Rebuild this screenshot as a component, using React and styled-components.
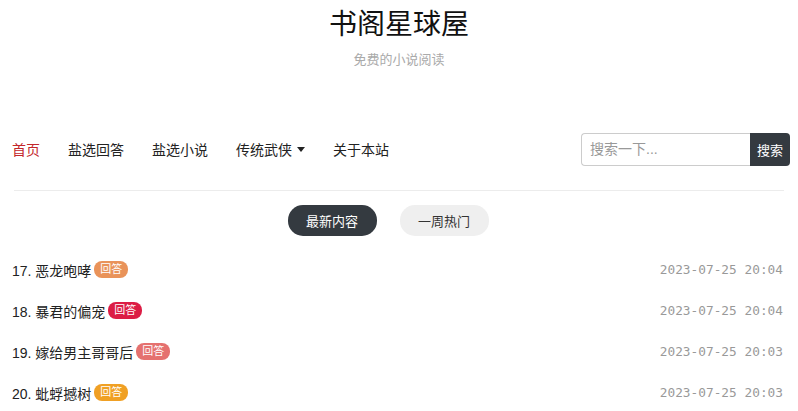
import styled, { createGlobalStyle } from "styled-components";

const GlobalStyle = createGlobalStyle`
  body {
    margin: 0;
    background: #fff;
    font-family: "Liberation Sans", "Noto Sans CJK SC", sans-serif;
    color: #222;
  }
`;

const items = [
  { no: 17, title: "恶龙咆哮", color: "#e9935a", time: "2023-07-25 20:04" },
  { no: 18, title: "暴君的偏宠", color: "#dc1d45", time: "2023-07-25 20:04" },
  { no: 19, title: "嫁给男主哥哥后", color: "#e5716f", time: "2023-07-25 20:03" },
  { no: 20, title: "蚍蜉撼树", color: "#f0a024", time: "2023-07-25 20:03" },
];

function App() {
  return (
    <Page>
      <GlobalStyle />
      <Header>
        <Title>书阁星球屋</Title>
        <Subtitle>免费的小说阅读</Subtitle>
      </Header>

      <NavBar>
        <Menu>
          <MenuItem $active>首页</MenuItem>
          <MenuItem>盐选回答</MenuItem>
          <MenuItem>盐选小说</MenuItem>
          <MenuItem>
            传统武侠<Caret />
          </MenuItem>
          <MenuItem>关于本站</MenuItem>
        </Menu>
        <SearchForm>
          <SearchInput placeholder="搜索一下..." />
          <SearchButton>搜索</SearchButton>
        </SearchForm>
      </NavBar>

      <Divider />

      <Tabs>
        <Tab $active>最新内容</Tab>
        <Tab>一周热门</Tab>
      </Tabs>

      <List>
        {items.map((item) => (
          <Row key={item.no}>
            <RowTitle>
              {item.no}. {item.title}
              <Badge $color={item.color}>回答</Badge>
            </RowTitle>
            <Time>{item.time}</Time>
          </Row>
        ))}
      </List>
    </Page>
  );
}

const Page = styled.div`
  width: 798px;
  height: 411px;
  overflow: hidden;
`;

const Header = styled.header`
  display: flex;
  flex-direction: column;
  align-items: center;
  padding-top: 6px;
`;

const Title = styled.h1`
  margin: 0;
  font-size: 28px;
  font-weight: 400;
  line-height: 38px;
  color: #111;
`;

const Subtitle = styled.p`
  margin: 6px 0 0;
  font-size: 13px;
  line-height: 20px;
  color: #aaa;
`;

const NavBar = styled.nav`
  display: flex;
  align-items: center;
  justify-content: space-between;
  margin-top: 62px;
  padding: 0 8px 0 12px;
  height: 34px;
`;

const Menu = styled.ul`
  display: flex;
  align-items: center;
  gap: 28px;
  margin: 0;
  padding: 0;
  list-style: none;
`;

const MenuItem = styled.li`
  display: flex;
  align-items: center;
  font-size: 14px;
  color: ${(p) => (p.$active ? "#c3272b" : "#222")};
`;

const Caret = styled.span`
  margin-left: 5px;
  width: 0;
  height: 0;
  border-left: 4px solid transparent;
  border-right: 4px solid transparent;
  border-top: 5px solid #222;
`;

const SearchForm = styled.form`
  display: flex;
  height: 33px;
`;

const SearchInput = styled.input`
  box-sizing: border-box;
  width: 169px;
  height: 100%;
  padding: 0 8px;
  border: 1px solid #ccc;
  border-right: none;
  border-radius: 4px 0 0 4px;
  font-family: inherit;
  font-size: 14px;
  outline: none;
  &::placeholder {
    color: #999;
  }
`;

const SearchButton = styled.button`
  width: 40px;
  height: 100%;
  border: none;
  border-radius: 0 4px 4px 0;
  background: #343a40;
  color: #fff;
  font-family: inherit;
  font-size: 13px;
  padding: 0;
`;

const Divider = styled.hr`
  margin: 24px 14px 0;
  border: none;
  border-top: 1px solid #ececec;
`;

const Tabs = styled.div`
  display: flex;
  justify-content: center;
  gap: 23px;
  margin-top: 14px;
  padding-right: 22px;
`;

const Tab = styled.button`
  width: 89px;
  height: 31px;
  border: none;
  border-radius: 15px;
  background: ${(p) => (p.$active ? "#343a40" : "#efefef")};
  color: ${(p) => (p.$active ? "#fff" : "#333")};
  font-family: inherit;
  font-size: 13px;
  padding: 0;
`;

const List = styled.ul`
  margin: 13px 0 0;
  padding: 0 15px 0 12px;
  list-style: none;
`;

const Row = styled.li`
  display: flex;
  align-items: center;
  justify-content: space-between;
  height: 41px;
`;

const RowTitle = styled.span`
  display: flex;
  align-items: center;
  font-size: 14px;
  color: #222;
`;

const Badge = styled.span`
  margin-left: 3px;
  padding: 0 6px;
  height: 17px;
  line-height: 17px;
  border-radius: 8px;
  background: ${(p) => p.$color};
  color: #fff;
  font-size: 11px;
`;

const Time = styled.span`
  font-family: "DejaVu Sans Mono", "Liberation Mono", monospace;
  font-size: 12.8px;
  color: #999;
`;

export default App;
